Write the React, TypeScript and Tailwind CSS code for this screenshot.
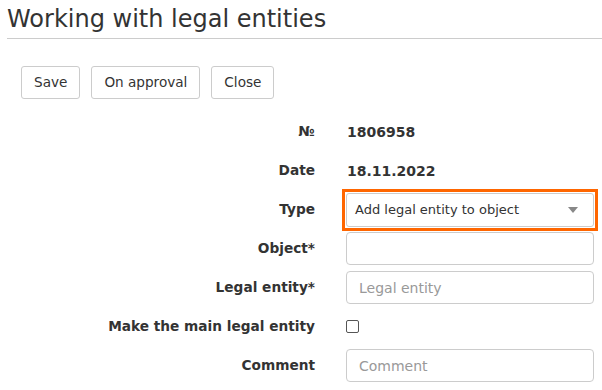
export default function App() {
  const rows = [
    { label: "№", kind: "text", value: "1806958" },
    { label: "Date", kind: "text", value: "18.11.2022" },
    { label: "Type", kind: "select", value: "Add legal entity to object" },
    { label: "Object*", kind: "input", value: "" },
    { label: "Legal entity*", kind: "input", value: "Legal entity" },
    { label: "Make the main legal entity", kind: "check", value: "" },
    { label: "Comment", kind: "input", value: "Comment" },
  ];

  return (
    <div className="w-[602px] h-[390px] overflow-hidden bg-white text-[#333] font-['DejaVu_Sans',sans-serif]">
      <div className="pl-[7px]">
        <h1 className="text-[24px] leading-[36px] pt-[1px] h-[38px]">Working with legal entities</h1>
        <div className="border-t border-[#ccc]" />
      </div>

      <div className="flex gap-[11px] pl-[21px] pt-[27px]">
        {["Save", "On approval", "Close"].map(b => (
          <button
            key={b}
            className="h-[33px] px-[12px] border border-[#ccc] rounded-[3px] bg-white text-[13.6px] text-[#333]"
          >
            {b}
          </button>
        ))}
      </div>

      <div className="flex flex-col pt-[13px]">
        {rows.map(r => (
          <div key={r.label} className="flex items-center h-[39px]">
            <div className="w-[315px] text-right font-bold text-[13.7px]">{r.label}</div>
            <div className="ml-[31px] w-[248px]">
              {r.kind === "text" && (
                <span className="pl-[1px] font-bold text-[14px]">{r.value}</span>
              )}
              {r.kind === "select" && (
                <div className="-mx-[4px] border-[3px] border-[#ff6600] p-[1px]">
                  <div className="h-[34px] flex items-center justify-between border border-[#ccc] rounded-[3px] pl-[8px] pr-[15px] text-[13px]">
                    <span>{r.value}</span>
                    <svg width="10" height="6" viewBox="0 0 10 6">
                      <path d="M0 0h10L5 6z" fill="#888" />
                    </svg>
                  </div>
                </div>
              )}
              {r.kind === "input" && (
                <input
                  placeholder={r.value}
                  className="w-full h-[33px] border border-[#ccc] rounded-[4px] px-[12px] text-[14px] placeholder:text-[#999] outline-none"
                />
              )}
              {r.kind === "check" && (
                <div className="w-[13px] h-[13px] border border-[#555] rounded-[2px] bg-white" />
              )}
            </div>
          </div>
        ))}
      </div>
    </div>
  );
}
